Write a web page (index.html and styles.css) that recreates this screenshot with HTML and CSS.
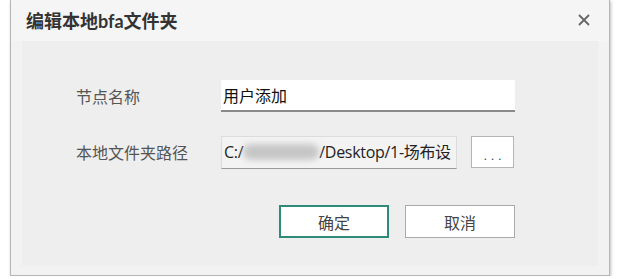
FILE: index.html
```html
<!DOCTYPE html>
<html lang="zh-CN">
<head>
    <meta charset="UTF-8">
    <meta name="viewport" content="width=device-width, initial-scale=1.0">
    <title>编辑本地bfa文件夹</title>
    <link rel="stylesheet" href="styles.css">
</head>
<body>
    <div class="dialog">
        <div class="dialog-head">
            <h2 class="dialog-title">编辑本地bfa文件夹</h2>
            <span class="dialog-close">
                <svg width="12" height="12" viewBox="0 0 12 12"><path d="M1 1 L11 11 M11 1 L1 11" stroke="#666" stroke-width="1.8" fill="none"/></svg>
            </span>
        </div>

        <div class="dialog-body">
            <div class="form-row">
                <label class="form-label">节点名称</label>
                <div class="text-input">用户添加</div>
            </div>

            <div class="form-row">
                <label class="form-label">本地文件夹路径</label>
                <div class="path-input">C:/<span class="blurred"></span>/Desktop/1-场布设</div>
                <button class="browse-btn">. . .</button>
            </div>

            <div class="actions">
                <button class="btn btn-primary">确定</button>
                <button class="btn">取消</button>
            </div>
        </div>
    </div>
</body>
</html>
```

FILE: styles.css
```css
body {
    font-family: "Noto Sans CJK SC", sans-serif;
    margin: 0;
    padding: 0;
    background-color: #ffffff;
}

.dialog {
    margin-left: 10px;
    width: 598px;
    height: 275px;
    background-color: #f2f2f2;
    border: 1px solid #b5b5b5;
    border-top: none;
    box-shadow: 1px 1px 3px rgba(0, 0, 0, 0.25);
    display: flex;
    flex-direction: column;
}

.dialog-head {
    height: 41px;
    background-color: #f5f5f5;
    display: flex;
    align-items: center;
    justify-content: space-between;
    padding: 0 19px 0 15px;
}

.dialog-title {
    margin: 0;
    font-family: "Lato", "Noto Sans CJK SC", sans-serif;
    font-size: 18px;
    font-weight: bold;
    color: #333;
    line-height: 1;
}

.dialog-close {
    display: flex;
    margin-top: -2px;
}

.dialog-body {
    margin: 0 11px;
    height: 225px;
    background-color: #eeeeee;
    padding: 39px 83px 0 54px;
    box-sizing: border-box;
}

.form-row {
    display: flex;
    align-items: center;
    height: 32px;
    margin-bottom: 24px;
}

.form-label {
    width: 145px;
    font-size: 16px;
    color: #555;
}

.text-input {
    flex: 1;
    height: 30px;
    background-color: white;
    border-bottom: 2px solid #8a8a8a;
    font-size: 16px;
    color: #111;
    line-height: 30px;
    padding-left: 2px;
}

.path-input {
    width: 232px;
    height: 31px;
    background-color: #f3f3f3;
    border: 1px solid #dcdcdc;
    border-bottom: 1px solid #999;
    font-family: "Open Sans", "Noto Sans CJK SC", sans-serif;
    font-size: 16px;
    letter-spacing: -0.3px;
    color: #222;
    line-height: 30px;
    padding-left: 2px;
    white-space: nowrap;
    overflow: hidden;
}

.blurred {
    display: inline-block;
    width: 76px;
    height: 16px;
    vertical-align: -2px;
    background-color: #c6c6c6;
    border-radius: 8px;
    filter: blur(3px);
}

.browse-btn {
    margin-left: 14px;
    width: 43px;
    height: 32px;
    background-color: white;
    border: 1px solid #b5b5b5;
    color: #34445a;
    font-size: 13px;
    padding: 6px 0 0;
}

.actions {
    display: flex;
    justify-content: flex-end;
    gap: 16px;
    margin-top: 37px;
}

.btn {
    width: 110px;
    height: 33px;
    background-color: white;
    border: 1px solid #aaa;
    font-family: "Noto Sans CJK SC", sans-serif;
    font-size: 16px;
    color: #444;
    padding: 0;
}

.btn-primary {
    border: 2px solid #2e8b7a;
}
```
